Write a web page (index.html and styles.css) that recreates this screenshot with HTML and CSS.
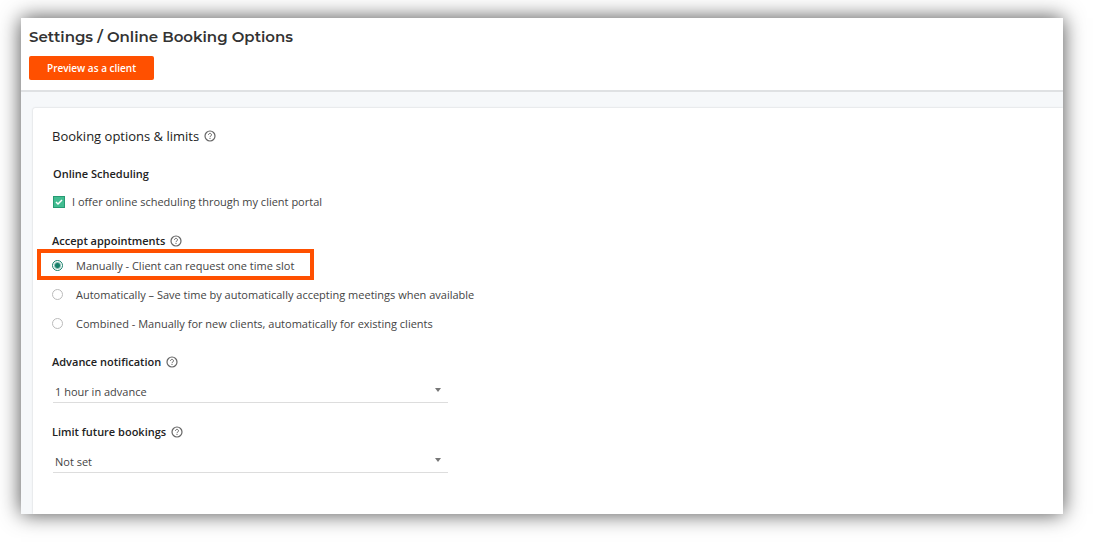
FILE: index.html
```html
<!DOCTYPE html>
<html lang="en">
<head>
<meta charset="utf-8">
<title>Settings / Online Booking Options</title>
<link rel="stylesheet" href="styles.css">
</head>
<body>
<svg class="sprite" aria-hidden="true">
  <symbol id="help" viewBox="0 0 12 12">
    <circle cx="6" cy="6" r="5" fill="none" stroke="currentColor" stroke-width="1.2"/>
    <path d="M4.5 4.8a1.5 1.4 0 1 1 2.4 1.1C6.3 6.3 6 6.5 6 7.2" fill="none" stroke="currentColor" stroke-width="1"/>
    <rect x="5.5" y="8" width="1" height="1" fill="currentColor"/>
  </symbol>
</svg>
<div class="window">
  <header class="header">
    <h1 class="title">Settings / Online Booking Options</h1>
    <button class="preview" type="button">Preview as a client</button>
  </header>
  <main class="content">
    <form class="card">
      <h2 class="heading">Booking options &amp; limits <svg class="help"><use href="#help"/></svg></h2>

      <section class="group scheduling">
        <h3 class="label">Online Scheduling</h3>
        <label class="check-row"><input class="check" type="checkbox" checked>I offer online scheduling through my client portal</label>
      </section>

      <fieldset class="group accept">
        <legend class="label">Accept appointments <svg class="help"><use href="#help"/></svg></legend>
        <div class="options">
          <label class="option selected"><input class="radio" type="radio" name="accept" checked>Manually - Client can request one time slot</label>
          <label class="option"><input class="radio" type="radio" name="accept">Automatically – Save time by automatically accepting meetings when available</label>
          <label class="option"><input class="radio" type="radio" name="accept">Combined - Manually for new clients, automatically for existing clients</label>
        </div>
      </fieldset>

      <div class="group advance">
        <label class="label" for="advance">Advance notification <svg class="help"><use href="#help"/></svg></label>
        <div class="select-wrap"><select class="select" id="advance"><option>1 hour in advance</option></select></div>
      </div>

      <div class="group limit">
        <label class="label" for="limit">Limit future bookings <svg class="help"><use href="#help"/></svg></label>
        <div class="select-wrap"><select class="select" id="limit"><option>Not set</option></select></div>
      </div>
    </form>
  </main>
</div>
</body>
</html>
```
FILE: styles.css
```css
* { box-sizing: border-box; }

body {
  margin: 0;
  min-height: 100vh;
  display: flex;
  padding: 18px 32px 28px 21px;
  background: #fff;
  color: #222;
  font-family: "Open Sans", "Noto Sans", sans-serif;
  font-size: 11px;
  line-height: 16px;
}

.sprite { display: none; }

.window {
  flex: 1;
  display: flex;
  flex-direction: column;
  background: #f6f8fa;
  box-shadow: 0 0 20px 0 rgba(0, 0, 0, 0.7);
}

.header {
  padding: 9px 8px 10px;
  background: #fff;
  border-bottom: 2px solid #dfe1e3;
}

.title {
  margin: 0 0 9px;
  font: 600 15px/20px Montserrat, Inter, sans-serif;
  color: #333;
}

.preview {
  display: block;
  height: 24px;
  padding: 0 18px;
  border: 0;
  border-radius: 2px;
  background: #ff5000;
  color: #fff;
  font: 600 10px/24px "Open Sans", sans-serif;
}

.content {
  flex: 1;
  display: flex;
  padding: 16px 0 0 12px;
}

.card {
  flex: 1;
  padding: 18px 19px;
  background: #fff;
  border-radius: 2px 0 0 0;
  box-shadow: 0 0 2px rgba(0, 0, 0, 0.2);
  clip-path: inset(-2px 0 0 -2px);
}

.heading, .label {
  display: flex;
  align-items: center;
  gap: 5px;
  margin: 0;
  padding: 0;
}

.heading { font-size: 13px; line-height: 20px; font-weight: 500; }
.label { font-size: 11px; font-weight: 600; }

.help { width: 12px; height: 12px; color: #666; }

.group { margin: 20px 0 0; padding: 0; border: 0; }
.group.accept { margin-top: 23px; }
.group.advance { margin-top: 16px; }
.group.limit { margin-top: 21px; }

.scheduling { padding-left: 1px; }

.check-row {
  display: flex;
  align-items: center;
  gap: 7px;
  margin-top: 12px;
  color: #444;
}

.check, .radio {
  appearance: none;
  flex: none;
  margin: 0;
  width: 12px;
  height: 12px;
}

.check {
  border: 1px solid #279a73;
  background: #42bd91 url("data:image/svg+xml,%3Csvg xmlns='http://www.w3.org/2000/svg' viewBox='0 0 10 10'%3E%3Cpath d='M2 5l2 2 4-4' fill='none' stroke='white' stroke-width='1.5'/%3E%3C/svg%3E");
}

.options { padding-top: 2px; }

.option {
  position: relative;
  display: flex;
  align-items: center;
  gap: 13px;
  width: fit-content;
  height: 29px;
  color: #444;
}

.radio {
  width: 11px;
  height: 11px;
  border: 1px solid #bbb;
  border-radius: 50%;
}

.radio:checked {
  border-color: #16806a;
  background: radial-gradient(circle, #16806a 2px, #fff 4px);
}

.selected::before {
  content: "";
  position: absolute;
  inset: -2px -20px 0 -15px;
  border: 4px solid #ff5000;
}

.select-wrap {
  position: relative;
  width: 396px;
  max-width: 100%;
  padding-left: 1px;
  margin-top: 12px;
}

.select-wrap::after {
  content: "";
  position: absolute;
  right: 7px;
  top: 6px;
  border: 3px solid transparent;
  border-top: 4px solid #777;
}

.select {
  appearance: none;
  display: block;
  width: 100%;
  height: 21px;
  padding: 0 20px 0 2px;
  border: 0;
  border-bottom: 1px solid #ddd;
  border-radius: 0;
  background: transparent;
  color: #444;
  font: inherit;
}
```
